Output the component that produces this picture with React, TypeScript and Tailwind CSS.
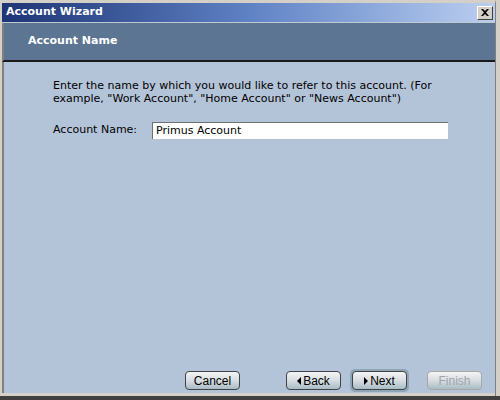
const WizButton = ({ label, arrow, disabled, active }: { label: string; arrow?: 'left' | 'right'; disabled?: boolean; active?: boolean }) => (
  <div className={`rounded-[5px] p-[2px] ${active ? 'bg-[#8fa5b5]' : 'bg-transparent'}`}>
    <div
      className={`w-[55px] h-[19px] rounded-[4px] border flex items-center justify-center gap-[2px] bg-gradient-to-b from-[#f4f4f4] via-[#d8dde2] to-[#a9bcc6] font-['Liberation_Sans',sans-serif] text-[12px] ${
        disabled ? 'border-[#a8a8a8] text-[#a0a4a8]' : 'border-[#404448] text-black'
      }`}
    >
      {arrow === 'left' && <span className="w-0 h-0 border-y-[4px] border-y-transparent border-r-[4px] border-r-black" />}
      {arrow === 'right' && <span className="w-0 h-0 border-y-[4px] border-y-transparent border-l-[4px] border-l-black" />}
      <span>{label}</span>
    </div>
  </div>
);

export default function App() {
  return (
    <div className="w-[500px] h-[400px] bg-[#d4d0c8] flex flex-col font-['DejaVu_Sans',sans-serif] overflow-hidden">
      <div className="flex-1 flex flex-col border-t-[3px] border-l-[2px] border-t-[#d4d0c8] border-l-[#d4d0c8] mr-[4px] border-r border-r-[#808080]">
        {/* title bar */}
        <div className="h-[19px] flex items-center justify-between pl-[4px] pr-[2px] bg-gradient-to-r from-[#1f3474] via-[#5f82c4] to-[#bccff0]">
          <span className="text-white font-bold text-[11px]">Account Wizard</span>
          <div className="w-[16px] h-[14px] bg-[#d4d0c8] border border-t-white border-l-white border-r-[#404040] border-b-[#404040] flex items-center justify-center">
            <svg width="8" height="7" viewBox="0 0 8 7">
              <path d="M0 0h2l2 2 2-2h2L5 3.5 8 7H6L4 5 2 7H0l3-3.5z" fill="black" />
            </svg>
          </div>
        </div>
        <div className="h-[1px] bg-[#c0c8d0]" />
        {/* header */}
        <div className="h-[39px] bg-[#5b7593] flex items-center pl-[24px] border-b-2 border-b-[#1a1a1a] border-l-2 border-l-[#808080]">
          <span className="text-white font-bold text-[11px]">Account Name</span>
        </div>
        {/* content */}
        <div className="flex-1 bg-[#b4c4d8] border-l-2 border-l-[#808080] flex flex-col pl-[49px] pt-[17px] text-[11px] text-black">
          <p className="leading-[13px] w-[400px]">
            Enter the name by which you would like to refer to this account. (For example, "Work Account", "Home Account" or "News Account")
          </p>
          <div className="flex items-center mt-[17px]">
            <span className="w-[99px]">Account Name:</span>
            <div className="w-[296px] h-[17px] bg-white border-t border-l border-[#707070] flex items-center pl-[3px]">
              Primus Account
            </div>
          </div>
          <div className="flex-1" />
          <div className="flex items-center pb-[1px] ml-[130px]">
            <WizButton label="Cancel" />
            <div className="w-[42px]" />
            <WizButton label="Back" arrow="left" />
            <div className="w-[7px]" />
            <WizButton label="Next" arrow="right" active />
            <div className="w-[16px]" />
            <WizButton label="Finish" disabled />
          </div>
        </div>
        <div className="h-[3px] bg-[#d4d0c8]" />
      </div>
      <div className="h-[4px] bg-[#404040]" />
    </div>
  );
}
